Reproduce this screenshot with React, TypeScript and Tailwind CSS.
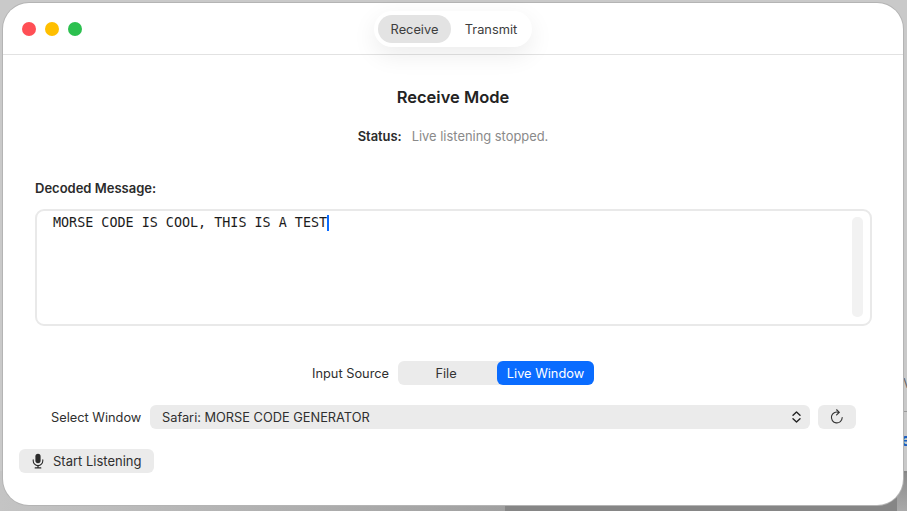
const ui = "font-['Inter','Liberation_Sans',sans-serif]"

function MicIcon() {
  return (
    <svg width="12" height="16" viewBox="0 0 12 16" fill="none" className="text-[#2b2b2b]">
      <rect x="3.4" y="0.8" width="5.2" height="9.4" rx="2.6" fill="currentColor" />
      <path d="M1.2 6.8v1a4.8 4.8 0 0 0 9.6 0v-1" stroke="currentColor" strokeWidth="1.1" strokeLinecap="round" />
      <path d="M6 12.6v1.9M3.2 14.9h5.6" stroke="currentColor" strokeWidth="1.2" strokeLinecap="round" />
    </svg>
  )
}

function RefreshIcon() {
  return (
    <svg width="14" height="16" viewBox="0 0 14 16" fill="none" className="text-[#333333]">
      <path d="M8.6 3.4A5.4 5.4 0 1 0 12.2 8.6" stroke="currentColor" strokeWidth="1.1" strokeLinecap="round" />
      <path d="M6.6 0.8l2.7 2.6-2.7 2.5" stroke="currentColor" strokeWidth="1.2" strokeLinecap="round" strokeLinejoin="round" />
    </svg>
  )
}

function UpDownIcon() {
  return (
    <svg width="9" height="12" viewBox="0 0 9 12" fill="none" className="text-[#222222]">
      <path d="M1 4.2l3.5-3.2L8 4.2M1 7.8l3.5 3.2L8 7.8" stroke="currentColor" strokeWidth="1.4" strokeLinecap="round" strokeLinejoin="round" />
    </svg>
  )
}

export default function App() {
  return (
    <div className={`${ui} relative h-[511px] w-[907px] overflow-hidden bg-[#c9c9c9] pl-[3px] pt-[3px]`}>
      {/* blurred desktop behind the window */}
      <div className="absolute bottom-0 left-0 h-[40px] w-[505px] bg-gradient-to-r from-[#c4c4c4] to-[#a0a0a0]" />
      <div className="absolute bottom-0 right-0 h-[40px] w-[402px] bg-[#868686]" />
      <div className="absolute right-0 top-[473px] h-[38px] w-[10px] bg-gradient-to-b from-[#8c8c8c] to-[#aaaaaa]" />
      <div className="absolute right-0 top-[411px] h-px w-[4px] bg-[#9a9a9a]" />
      <div className="absolute right-[-5px] top-[375px] text-[13px] leading-[16px] text-[#666666]">V</div>
      <div className="absolute right-[-4px] top-[430px] text-[17px] font-bold leading-[20px] text-[#1a5fc0]">e</div>

      <div className="relative flex h-[502px] w-[900px] flex-col rounded-[26px] bg-white shadow-[0_0_0_1px_#b4b4b4]">
        <div className="relative flex h-[52px] shrink-0 items-center gap-[9px] border-b border-[#e2e2e2] pl-[19px]">
          <span className="h-[14px] w-[14px] rounded-full bg-[#ff4f55]" />
          <span className="h-[14px] w-[14px] rounded-full bg-[#ffbf00]" />
          <span className="h-[14px] w-[14px] rounded-full bg-[#2cc04f]" />
          <div className="absolute left-[371px] top-[8px] flex h-[36px] w-[158px] items-center rounded-full bg-white px-[4px] text-[12.8px] text-[#3d3d3d] shadow-[0_8px_24px_rgba(0,0,0,0.08)]">
            <span className="flex h-[28px] w-[74px] items-center justify-center rounded-full bg-[#e3e3e3] pt-[2px]">Receive</span>
            <span className="flex h-[28px] w-[78px] items-center justify-center pl-[3px] pt-[2px]">Transmit</span>
          </div>
        </div>

        <h1 className="mt-[31px] text-center text-[16.5px] font-semibold leading-[22px] text-[#232323]">Receive Mode</h1>
        <p className="mt-[19px] flex justify-center gap-[10px] text-[12.9px] leading-[20px]">
          <span className="font-semibold text-[#2b2b2b]">Status:</span>
          <span className="text-[#8a8a8a]">Live listening stopped.</span>
        </p>

        <div className="mt-[31px] pl-[32px] text-[13px] font-semibold leading-[20px] text-[#2b2b2b]">Decoded Message:</div>
        <div className="ml-[32px] mt-[11px] flex h-[117px] w-[837px] justify-between rounded-[9px] border-2 border-[#e9e9e9] pb-[7px] pl-[16px] pr-[7px] pt-[4px]">
          <div className="flex h-[16px] items-center font-['DejaVu_Sans_Mono','Liberation_Mono',monospace] text-[13.4px] leading-[16px] text-[#1c1c1c]">
            <span>MORSE CODE IS COOL, THIS IS A TEST</span>
            <span className="h-[16px] w-[2px] bg-[#0a6cff]" />
          </div>
          <div className="mt-[2px] w-[11px] rounded-[5px] bg-[#f2f2f2]" />
        </div>

        <div className="mt-[35px] flex h-[24px] items-center pl-[309px] text-[12.8px]">
          <span className="w-[86px] pt-[2px] text-[#2f2f2f]">Input Source</span>
          <div className="flex h-[24px] w-[196px] rounded-[6px] bg-[#ebebeb]">
            <span className="flex w-[99px] items-center justify-center pr-[3px] pt-[2px] text-[#333333]">File</span>
            <span className="flex w-[97px] items-center justify-center rounded-[6px] bg-[#0a6cff] pt-[2px] text-white">Live Window</span>
          </div>
        </div>

        <div className="mt-[20px] flex h-[24px] items-center pl-[48px] text-[12.8px] text-[#2f2f2f]">
          <span className="w-[99px] pt-[2px]">Select Window</span>
          <div className="flex h-[24px] w-[660px] items-center justify-between rounded-[6px] bg-[#ebebeb] pl-[12px] pr-[9px]">
            <span className="pt-[2px]">Safari: MORSE CODE GENERATOR</span>
            <UpDownIcon />
          </div>
          <div className="ml-[8px] flex h-[24px] w-[38px] items-center justify-center rounded-[6px] bg-[#ebebeb]">
            <RefreshIcon />
          </div>
        </div>

        <div className="ml-[16px] mt-[20px] flex h-[24px] w-[135px] items-center gap-[9px] rounded-[6px] bg-[#ebebeb] pl-[13px] text-[13px] text-[#2f2f2f]">
          <MicIcon />
          <span className="pt-[2px]">Start Listening</span>
        </div>
      </div>
    </div>
  )
}
